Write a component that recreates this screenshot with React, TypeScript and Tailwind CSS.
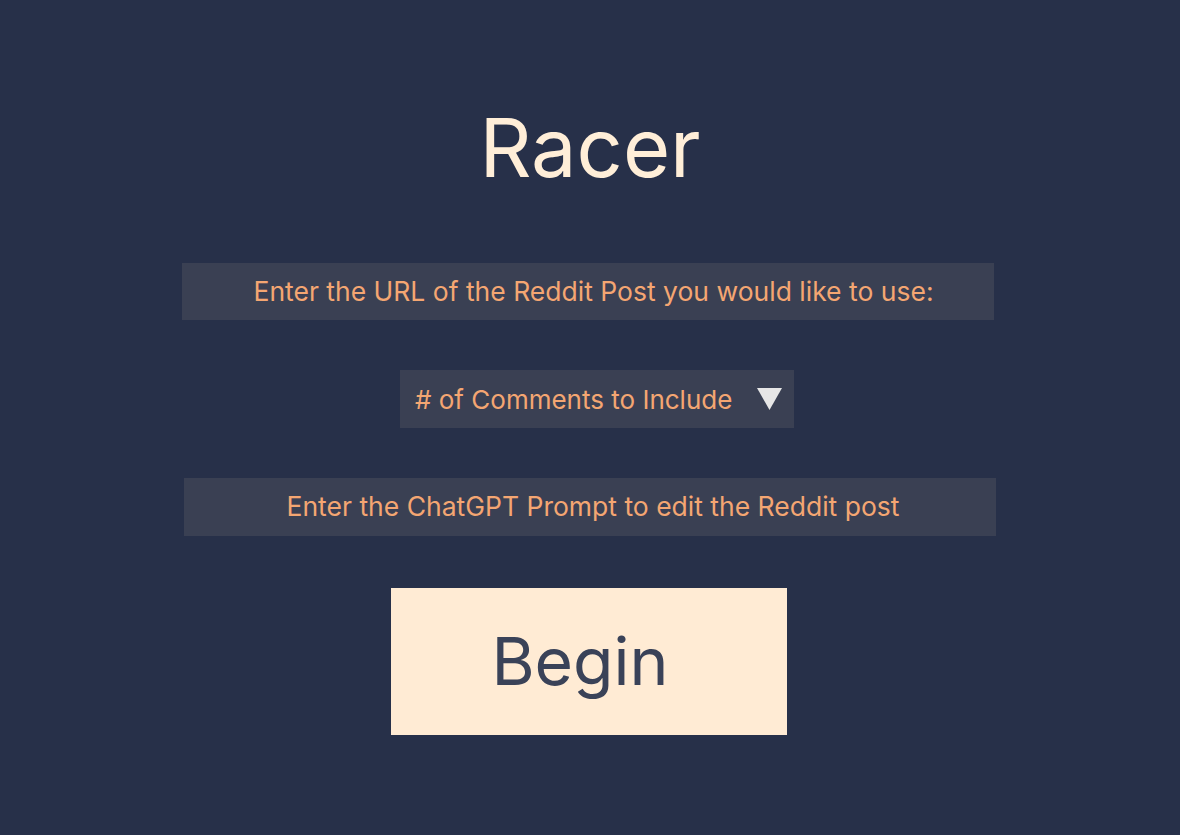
import React from 'react';

const App: React.FC = () => {
  return (
    <div className="min-h-[835px] w-full bg-[#273049] font-['Inter',sans-serif] flex flex-col items-center">
      <h1 className="mt-[108px] text-[81px] leading-none text-[#ffeed8] font-normal">Racer</h1>

      <div className="mt-[74px] mr-[4px] w-[812px] h-[57px] bg-[#3a4053] flex items-center justify-center pl-[11px]">
        <span className="text-[26.5px] text-[#f4a672]">Enter the URL of the Reddit Post you would like to use:</span>
      </div>

      <div className="mt-[50px] ml-[14px] w-[394px] h-[58px] bg-[#3a4053] flex items-center justify-between pl-[15px] pr-[12px]">
        <span className="text-[26px] text-[#f4a672]"># of Comments to Include</span>
        <svg width="25" height="22" viewBox="0 0 25 22">
          <polygon points="0,0 25,0 12.5,22" fill="#e6e6e6" />
        </svg>
      </div>

      <div className="mt-[50px] w-[812px] h-[58px] bg-[#3a4053] flex items-center justify-center pl-[6px]">
        <span className="text-[26.5px] text-[#f4a672]">Enter the ChatGPT Prompt to edit the Reddit post</span>
      </div>

      <button className="mt-[52px] mr-[2px] w-[396px] h-[147px] bg-[#ffebd4] flex items-center justify-center pr-[18px]">
        <span className="text-[66px] text-[#3a4258]">Begin</span>
      </button>
    </div>
  );
};

export default App;
